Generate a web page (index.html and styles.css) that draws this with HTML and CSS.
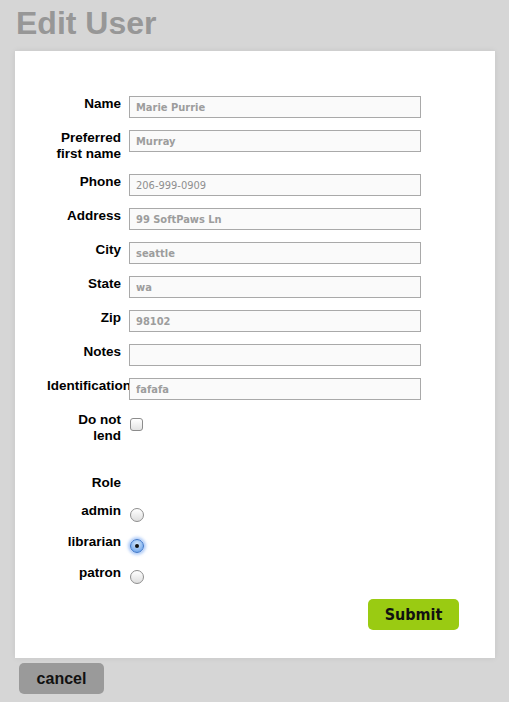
FILE: index.html
```html
<!DOCTYPE html>
<html>
<head>
<meta charset="utf-8">
<link rel="stylesheet" href="styles.css">
</head>
<body>
<h1 class="title">Edit User</h1>
<div class="card">
  <form class="form">
    <div class="row"><label class="lbl">Name</label><input class="field" value="Marie Purrie"></div>
    <div class="row"><label class="lbl">Preferred first name</label><input class="field" value="Murray"></div>
    <div class="row"><label class="lbl">Phone</label><input class="field field-light" value="206-999-0909"></div>
    <div class="row"><label class="lbl">Address</label><input class="field" value="99 SoftPaws Ln"></div>
    <div class="row"><label class="lbl">City</label><input class="field" value="seattle"></div>
    <div class="row"><label class="lbl">State</label><input class="field" value="wa"></div>
    <div class="row"><label class="lbl">Zip</label><input class="field" value="98102"></div>
    <div class="row"><label class="lbl">Notes</label><input class="field" value=""></div>
    <div class="row"><label class="lbl lbl-nowrap">Identification</label><input class="field" value="fafafa"></div>
    <div class="row"><label class="lbl">Do not lend</label><span class="check"></span></div>
    <div class="row row-role"><label class="lbl">Role</label></div>
    <div class="row row-radio"><label class="lbl">admin</label><span class="radio"></span></div>
    <div class="row row-radio"><label class="lbl">librarian</label><span class="radio radio-on"></span></div>
    <div class="row row-radio"><label class="lbl">patron</label><span class="radio"></span></div>
    <div class="actions"><button type="button" class="submit">Submit</button></div>
  </form>
</div>
<button type="button" class="cancel">cancel</button>
</body>
</html>
```
FILE: styles.css
```css
html, body {
  margin: 0;
  padding: 0;
  background: #d6d6d6;
}
body {
  font-family: "Liberation Sans", Arial, sans-serif;
  height: 702px;
  overflow: hidden;
}
.title {
  margin: 5px 0 9px 16px;
  font-size: 32px;
  line-height: 37px;
  font-weight: bold;
  color: #979797;
}
.card {
  margin-left: 15px;
  width: 480px;
  box-sizing: border-box;
  background: #fff;
  padding: 45px 36px 28px 32px;
  box-shadow: 0 0 6px rgba(0,0,0,0.08);
}
.form {
  display: flex;
  flex-direction: column;
  gap: 12px;
  margin: 0;
}
.row {
  display: flex;
  align-items: flex-start;
  gap: 8px;
}
.lbl {
  width: 74px;
  flex: none;
  text-align: right;
  font-size: 13.5px;
  line-height: 16px;
  font-weight: bold;
  color: #000;
}
.lbl-nowrap { white-space: nowrap; }
.field {
  width: 292px;
  height: 22px;
  box-sizing: border-box;
  border: 1px solid #a9a9a9;
  background: #fafafa;
  padding: 0 6px;
  margin: 0;
  font-family: "DejaVu Sans Condensed", "DejaVu Sans", sans-serif;
  font-stretch: condensed;
  font-weight: bold;
  font-size: 11px;
  color: #9d9d9d;
  outline: none;
}
.field-light {
  font-weight: normal;
  color: #8f8f8f;
}
.check {
  width: 11px;
  height: 11px;
  margin: 6px 0 0 1px;
  border: 1px solid #8c8c8c;
  border-radius: 3px;
  background: linear-gradient(#ffffff, #e3e3e3);
}
.row-role {
  margin-top: 19px;
}
.radio {
  width: 12px;
  height: 12px;
  margin: 5px 0 0 1px;
  border: 1px solid #8e8e8e;
  border-radius: 50%;
  background: linear-gradient(#ffffff, #dedede);
  position: relative;
}
.radio-on {
  border-color: #3f77c9;
  background: radial-gradient(circle at 50% 35%, #d6e8fb, #7fb0ee 70%, #5b93de);
  box-shadow: 0 0 3px 2px rgba(110,160,240,0.55);
}
.radio-on::after {
  content: "";
  position: absolute;
  left: 4px;
  top: 4px;
  width: 4px;
  height: 4px;
  border-radius: 50%;
  background: #111;
}
.actions {
  display: flex;
  justify-content: flex-end;
  margin-top: 3px;
}
.submit {
  width: 91px;
  height: 31px;
  border: none;
  border-radius: 5px;
  background: #9acb12;
  color: #111;
  font-family: "DejaVu Sans Condensed", "DejaVu Sans", sans-serif;
  font-stretch: condensed;
  font-weight: bold;
  font-size: 16px;
  padding: 0;
}
.cancel {
  display: block;
  margin: 5px 0 0 19px;
  width: 85px;
  height: 31px;
  border: none;
  border-radius: 5px;
  background: #9a9a9a;
  color: #111;
  font-family: "Liberation Sans", Arial, sans-serif;
  font-weight: bold;
  font-size: 16px;
  padding: 0;
}
```
